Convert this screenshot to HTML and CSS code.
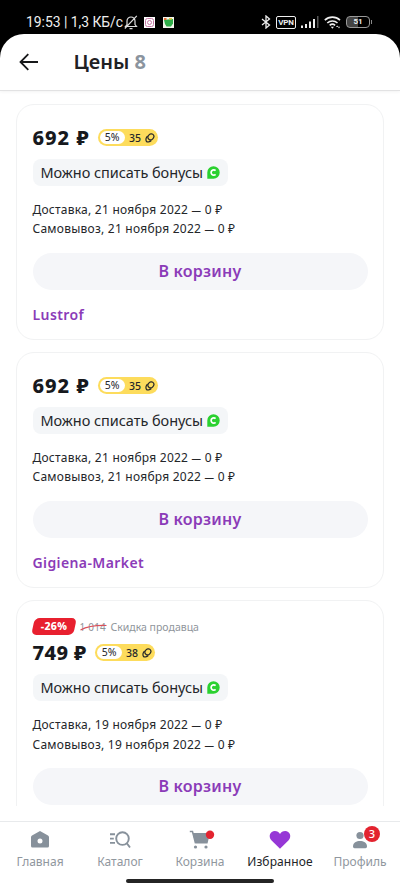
FILE: index.html
```html
<!DOCTYPE html>
<html lang="ru">
<head>
<meta charset="utf-8">
<title>Цены</title>
<link rel="stylesheet" href="styles.css">
</head>
<body>
<svg class="defs" width="0" height="0" aria-hidden="true">
  <symbol id="coin" viewBox="0 0 10 10"><g fill="none" stroke="#24262a" stroke-width="1.2"><ellipse cx="5.9" cy="3.8" rx="2.7" ry="3.2" transform="rotate(40 5.900 3.800)"/><path d="M2.700 3.100C1 4.200.5 6.700 1.300 8.100c.9 1.500 3.500 1 5-.6"/></g></symbol>
  <symbol id="bonus" viewBox="0 0 13 13"><path d="M6.5.3A6.2 6.2 0 1 1 6.5 12.7H.3V6.5A6.2 6.2 0 0 1 6.5.3Z" fill="#2bd130"/><path d="M8.600 4.700A2.600 2.600 0 1 0 8.600 8.300" fill="none" stroke="#fff" stroke-width="1.7"/></symbol>
</svg>
<div class="phone">
  <div class="status">
    <span class="clock">19:53 | 1,3 КБ/с</span>
    <svg class="bell" width="14" height="15" viewBox="0 0 14 15" fill="none" stroke="#ddd" stroke-width="1.2"><path d="M1.500 11.500h11L11 9.500V6a4 4 0 0 0-8 0v3.500ZM5.500 13.600h3M.8 13.500 12.800.8"/></svg>
    <svg class="insta" width="11" height="11" viewBox="0 0 11 11"><path fill="#fff" d="M0 0h11v11H0z"/><g fill="none" stroke="#c77aa8"><rect x="1.5" y="1.5" width="8" height="8" rx="2"/><circle cx="5.5" cy="5.5" r="2"/></g></svg>
    <svg class="app" width="11" height="11" viewBox="0 0 11 11"><path fill="#f4f6ec" d="M0 0h11v11H0z"/><path fill="#2fae49" d="M1 3 5 2.500 10 2v4.500L8 9.500H3.500L2 7Z"/><path fill="#e4703b" d="M1 1h2.500v2H1z"/><path fill="#e2c641" d="M6 1h3v1.500H6z"/></svg>
    <span class="gap"></span>
    <svg width="10" height="14" viewBox="0 0 10 14" fill="none" stroke="#eee" stroke-width="1.3"><path d="M1 4l7.500 6L5 13V1l3.500 3L1 10"/></svg>
    <span class="vpn">VPN</span>
    <svg class="signal" width="18" height="12" viewBox="0 0 18 12" fill="#eee"><path d="M0 9.500h2V12H0zM4 8h2v4H4zM8 5.500h2V12H8zM12 3h2v9h-2z"/><path fill="#555" d="M16 0h1.500v12H16z"/></svg>
    <svg class="wifi" width="17" height="13" viewBox="0 0 17 13" fill="none" stroke="#eee" stroke-width="1.6"><path d="M.8 4.200a11 11 0 0 1 15.200 0M3.300 7a7.400 7.400 0 0 1 10.200 0M5.700 9.400a4 4 0 0 1 5.400 0"/><path fill="#eee" stroke="none" d="M6.800 10.800h3.200l-1.600 1.900zM12 11l1.200-1.500 1 1.500zM14 10.800h2l-1 1.700z"/></svg>
    <span class="battery">51</span>
  </div>
  <div class="screen">
    <header class="header">
      <svg width="20" height="18" viewBox="0 0 20 18" fill="none" stroke="#17181a" stroke-width="1.8"><path d="M19 9H1.500M9.300 1.200 1.500 9l7.800 7.800"/></svg>
      <h1>Цены <span>8</span></h1>
    </header>
    <main class="list">
      <article class="card">
        <div class="price-row"><span class="price">692 ₽</span><span class="cashback"><b>5%</b><i>35</i><svg width="10" height="10"><use href="#coin"/></svg></span></div>
        <div class="chip"><span>Можно списать бонусы</span><svg width="13" height="13"><use href="#bonus"/></svg></div>
        <div class="delivery"><p>Доставка, 21 ноября 2022 <span class="dash">—</span> 0 ₽</p><p>Самовывоз, 21 ноября 2022 <span class="dash">—</span> 0 ₽</p></div>
        <button class="buy">В корзину</button>
        <a class="seller">Lustrof</a>
      </article>
      <article class="card">
        <div class="price-row"><span class="price">692 ₽</span><span class="cashback"><b>5%</b><i>35</i><svg width="10" height="10"><use href="#coin"/></svg></span></div>
        <div class="chip"><span>Можно списать бонусы</span><svg width="13" height="13"><use href="#bonus"/></svg></div>
        <div class="delivery"><p>Доставка, 21 ноября 2022 <span class="dash">—</span> 0 ₽</p><p>Самовывоз, 21 ноября 2022 <span class="dash">—</span> 0 ₽</p></div>
        <button class="buy">В корзину</button>
        <a class="seller">Gigiena-Market</a>
      </article>
      <article class="card discounted">
        <div class="sale"><span class="percent"><span>-26%</span></span><span class="old">1 014<svg width="27" height="8" viewBox="0 0 27 8"><path d="M.5 7Q10 2 26.500 2.500" fill="none" stroke="#d9505c" stroke-width="1.200"/></svg></span><span class="note">Скидка продавца</span></div>
        <div class="price-row"><span class="price low">749 ₽</span><span class="cashback"><b>5%</b><i>38</i><svg width="10" height="10"><use href="#coin"/></svg></span></div>
        <div class="chip"><span>Можно списать бонусы</span><svg width="13" height="13"><use href="#bonus"/></svg></div>
        <div class="delivery"><p>Доставка, 19 ноября 2022 <span class="dash">—</span> 0 ₽</p><p>Самовывоз, 19 ноября 2022 <span class="dash">—</span> 0 ₽</p></div>
        <button class="buy">В корзину</button>
      </article>
    </main>
    <nav class="tabs">
      <a><svg width="24" height="20" viewBox="0 0 24 20"><path fill="#87919b" fill-rule="evenodd" d="M12 1 20 5.500q1 .6 1 1.800V16q0 1.500-1.500 1.500h-15Q3 17.500 3 16V7.300q0-1.200 1-1.800ZM12 8.500a2.500 2.500 0 1 0 0 5 2.500 2.500 0 0 0 0-5Z"/></svg><span>Главная</span></a>
      <a><svg width="24" height="20" viewBox="0 0 24 20" fill="none" stroke="#87919b" stroke-width="1.900"><circle cx="14.500" cy="8.600" r="6.300"/><path d="m18.800 13.200 3.200 4.300M2 4.300h5M2 8.600h3.800M2 12.900h5"/></svg><span>Каталог</span></a>
      <a><svg width="24" height="20" viewBox="0 0 24 20"><path fill="#87919b" d="M4.500 3h17.500l-2.500 10.500H7.500Z"/><path d="M1.800 1.500h2.700l3 11.800" fill="none" stroke="#87919b" stroke-width="1.500"/><circle cx="7.500" cy="17" r="1.600" fill="#87919b"/><circle cx="18" cy="17" r="1.600" fill="#87919b"/><circle cx="22" cy="4.700" r="4.200" fill="#e3232f"/></svg><span>Корзина</span></a>
      <a class="active"><svg width="24" height="20" viewBox="0 0 24 20"><path fill="#9637d6" d="M12 18.800 3.600 10.600C-.2 6.500 2.200 1 6.800 1c2.300 0 4.200 1.200 5.200 3 1-1.800 2.900-3 5.200-3 4.600 0 7 5.500 3.200 9.600Z"/></svg><span>Избранное</span></a>
      <a><svg width="24" height="20" viewBox="0 0 24 20" fill="#87919b"><circle cx="12" cy="5.500" r="3.600"/><path d="M5 16.500c0-4 3.500-5.500 7-5.500s7 1.500 7 5.500q0 1.700-1.500 1.700h-11Q5 18.200 5 16.500Z"/></svg><em class="count">3</em><span>Профиль</span></a>
    </nav>
    <div class="home"><span></span></div>
  </div>
</div>
</body>
</html>
```
FILE: styles.css
```css
* { box-sizing: border-box; }
body { margin: 0; background: #000; font-family: "Noto Sans", sans-serif; color: #24262a; }
.defs { display: none; }
.phone { width: 400px; height: 889px; display: flex; flex-direction: column; overflow: hidden; background: #000; }
.status { height: 34px; flex: none; display: flex; align-items: center; padding: 10px 30px 0 26px; color: #eee; }
.clock { font: 400 13.900px/20px Roboto, sans-serif; letter-spacing: -.02px; white-space: nowrap; width: 98px; }
.status svg { flex: none; }
.insta { margin-left: 6px; }
.app { margin-left: 8px; }
.gap { flex: 1; }
.vpn { margin-left: 5px; width: 20px; height: 13px; border: 1.500px solid #eee; border-radius: 2px; font: 700 8px/11px Roboto, sans-serif; text-align: center; letter-spacing: -.2px; }
.signal { margin-left: 5px; }
.wifi { margin-left: 5px; }
.battery { position: relative; margin-left: 5px; width: 24px; height: 12px; border: 1.500px solid #999; border-radius: 4px; background: linear-gradient(90deg, #444 50%, #000 50%); font: 700 8px/10px Roboto, sans-serif; text-align: center; }
.battery::after { content: ""; position: absolute; right: -3px; top: 3px; width: 1.500px; height: 4px; background: #888; }
.screen { flex: 1; min-height: 0; display: flex; flex-direction: column; background: #fff; border-radius: 24px 24px 0 0; }
.header { height: 57px; flex: none; display: flex; align-items: center; padding-left: 19px; border-bottom: 1px solid #e2e2e3; box-shadow: 0 1px 3px #0000000d; }
h1 { margin: 0 0 1px 34.500px; font-size: 20px; line-height: 28px; font-weight: 600; color: #1f2124; letter-spacing: 0; }
h1 span { color: #8b949e; font-weight: 700; }
.list { height: 715px; flex: none; overflow: hidden; padding: 13px 16px 0; display: flex; flex-direction: column; gap: 12.200px; }
.card { flex: none; height: 236px; border: 1.500px solid #f1f2f3; border-radius: 18px; padding: 24px 15px 0 15.500px; display: flex; flex-direction: column; align-items: flex-start; }
.price-row { height: 17px; display: flex; align-items: center; }
.price { width: 57px; font-size: 20px; line-height: 24px; font-weight: 800; letter-spacing: 1px; color: #17191d; white-space: nowrap; }
.cashback { margin-left: 8px; width: 60px; height: 17px; border-radius: 9px; background: #fddc5c; display: flex; align-items: center; padding-left: 2px; font-size: 10.500px; line-height: 14px; }
.cashback b { width: 25px; height: 13px; line-height: 13px; border-radius: 7px; background: #fff; text-align: center; font-weight: 400; }
.cashback i { margin-left: 4.500px; width: 16px; font-style: normal; font-weight: 500; }
.cashback svg { width: 10px; height: 10px; flex: none; }
.chip { margin-top: 13px; width: 195px; height: 27px; border-radius: 8px; background: #f4f6f8; display: flex; align-items: center; justify-content: space-between; padding: 0 8px 1px; font-size: 14.500px; line-height: 20px; letter-spacing: -.05px; white-space: nowrap; }
.chip svg { flex: none; margin-top: 1px; }
.delivery { margin-top: 14px; font-size: 12px; line-height: 19.300px; letter-spacing: .24px; white-space: nowrap; }
.delivery p { margin: 0; height: 19.300px; }
.dash { font-size: 9.500px; line-height: 1; font-weight: 700; }
.buy { margin-top: 14px; width: 335px; height: 37px; flex: none; border: 0; border-radius: 19px; background: #f5f6f9; color: #8b3bb8; font: 600 16px/22px "Noto Sans", sans-serif; letter-spacing: .22px; }
.seller { margin-top: 15px; font-size: 14px; line-height: 20px; font-weight: 600; letter-spacing: .4px; color: #8b3bb8; }
.discounted { height: 260px; padding-top: 17px; }
.sale { height: 17px; display: flex; align-items: center; font-size: 10.500px; line-height: 14px; color: #8f959b; white-space: nowrap; }
.percent { width: 42px; height: 17px; border-radius: 5px; background: #e8202f; color: #fff; font-weight: 800; letter-spacing: .3px; text-align: center; line-height: 17px; transform: skewX(-12deg); }
.percent span { display: block; transform: skewX(12deg); }
.old { position: relative; margin-left: 5px; width: 31px; font-size: 10px; letter-spacing: .2px; }
.old svg { position: absolute; left: 0; top: 3px; }
.discounted .price-row { margin-top: 9px; }
.low { width: 54px; letter-spacing: .4px; }
.tabs { height: 52px; flex: none; margin-top: 15px; border-top: 1px solid #e8eaec; display: grid; grid-template-columns: repeat(5, 80px); }
.tabs a { position: relative; display: flex; flex-direction: column; align-items: center; padding-top: 8px; font-size: 12px; line-height: 16px; color: #90979e; }
.tabs svg { overflow: visible; }
.tabs span { margin-top: 4px; }
.tabs .active { color: #222427; letter-spacing: .12px; }
.count { position: absolute; left: 44px; top: 4px; width: 16px; height: 16px; border-radius: 8px; background: #e3232f; color: #fff; font: 500 11px/16px "Noto Sans", sans-serif; text-align: center; }
.home { display: flex; justify-content: center; padding-top: 6px; }
.home span { width: 148px; height: 4px; border-radius: 2px; background: #242424; }
```
